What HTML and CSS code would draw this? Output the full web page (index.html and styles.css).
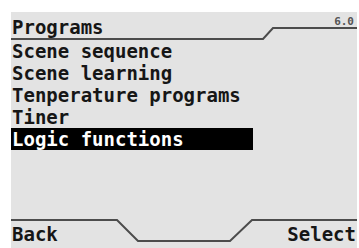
FILE: index.html
```html
<!DOCTYPE html>
<html lang="en">
<head>
    <meta charset="UTF-8">
    <title>Programs</title>
    <link rel="stylesheet" href="styles.css">
</head>
<body>
    <div class="screen">
        <header class="top-bar">
            <svg class="tab-line" width="346" height="28" viewBox="0 0 346 28">
                <polyline points="0,27 252,27 262,16 346,16" />
            </svg>
            <span class="title">Programs</span>
            <span class="version">6.0</span>
        </header>

        <ul class="menu">
            <li>Scene sequence</li>
            <li>Scene learning</li>
            <li>Tenperature programs</li>
            <li>Tiner</li>
            <li class="selected">Logic functions</li>
        </ul>

        <footer class="soft-keys">
            <svg class="tab-line" width="346" height="30" viewBox="0 0 346 30">
                <polyline points="0,2 106,2 127,23 219,23 241,2 346,2" />
            </svg>
            <span class="key">Back</span>
            <span class="key">Select</span>
        </footer>
    </div>
</body>
</html>
```

FILE: styles.css
```css
:root {
    --lcd-bg: #e3e3e3;
    --lcd-ink: #161616;
    --lcd-line: #4c4c4c;
}

body {
    margin: 0;
    background: #ffffff;
    font-family: 'DejaVu Sans Mono', monospace;
    font-size: 19px;
    font-weight: bold;
    color: var(--lcd-ink);
}

.screen {
    margin: 12px 0 0 11px;
    width: 346px;
    height: 236px;
    background: var(--lcd-bg);
    display: flex;
    flex-direction: column;
}

.top-bar {
    position: relative;
    height: 28px;
    display: flex;
    justify-content: space-between;
    align-items: flex-start;
}

.tab-line {
    position: absolute;
    left: 0;
    top: 0;
}

.tab-line polyline {
    fill: none;
    stroke: var(--lcd-line);
    stroke-width: 2;
}

.title {
    padding: 4px 0 0 1px;
    line-height: 22px;
}

.version {
    font-size: 11px;
    color: #555;
    padding: 3px 3px 0 0;
}

.menu {
    list-style: none;
    margin: 0;
    padding: 0;
    flex: 1;
}

.menu li {
    height: 22px;
    line-height: 22px;
    padding-left: 1px;
    width: 241px;
}

.menu li.selected {
    background: #000000;
    color: #ffffff;
}

.soft-keys {
    position: relative;
    height: 30px;
    display: flex;
    justify-content: space-between;
    align-items: flex-end;
}

.key {
    line-height: 22px;
    padding: 0 1px 3px;
}
```
